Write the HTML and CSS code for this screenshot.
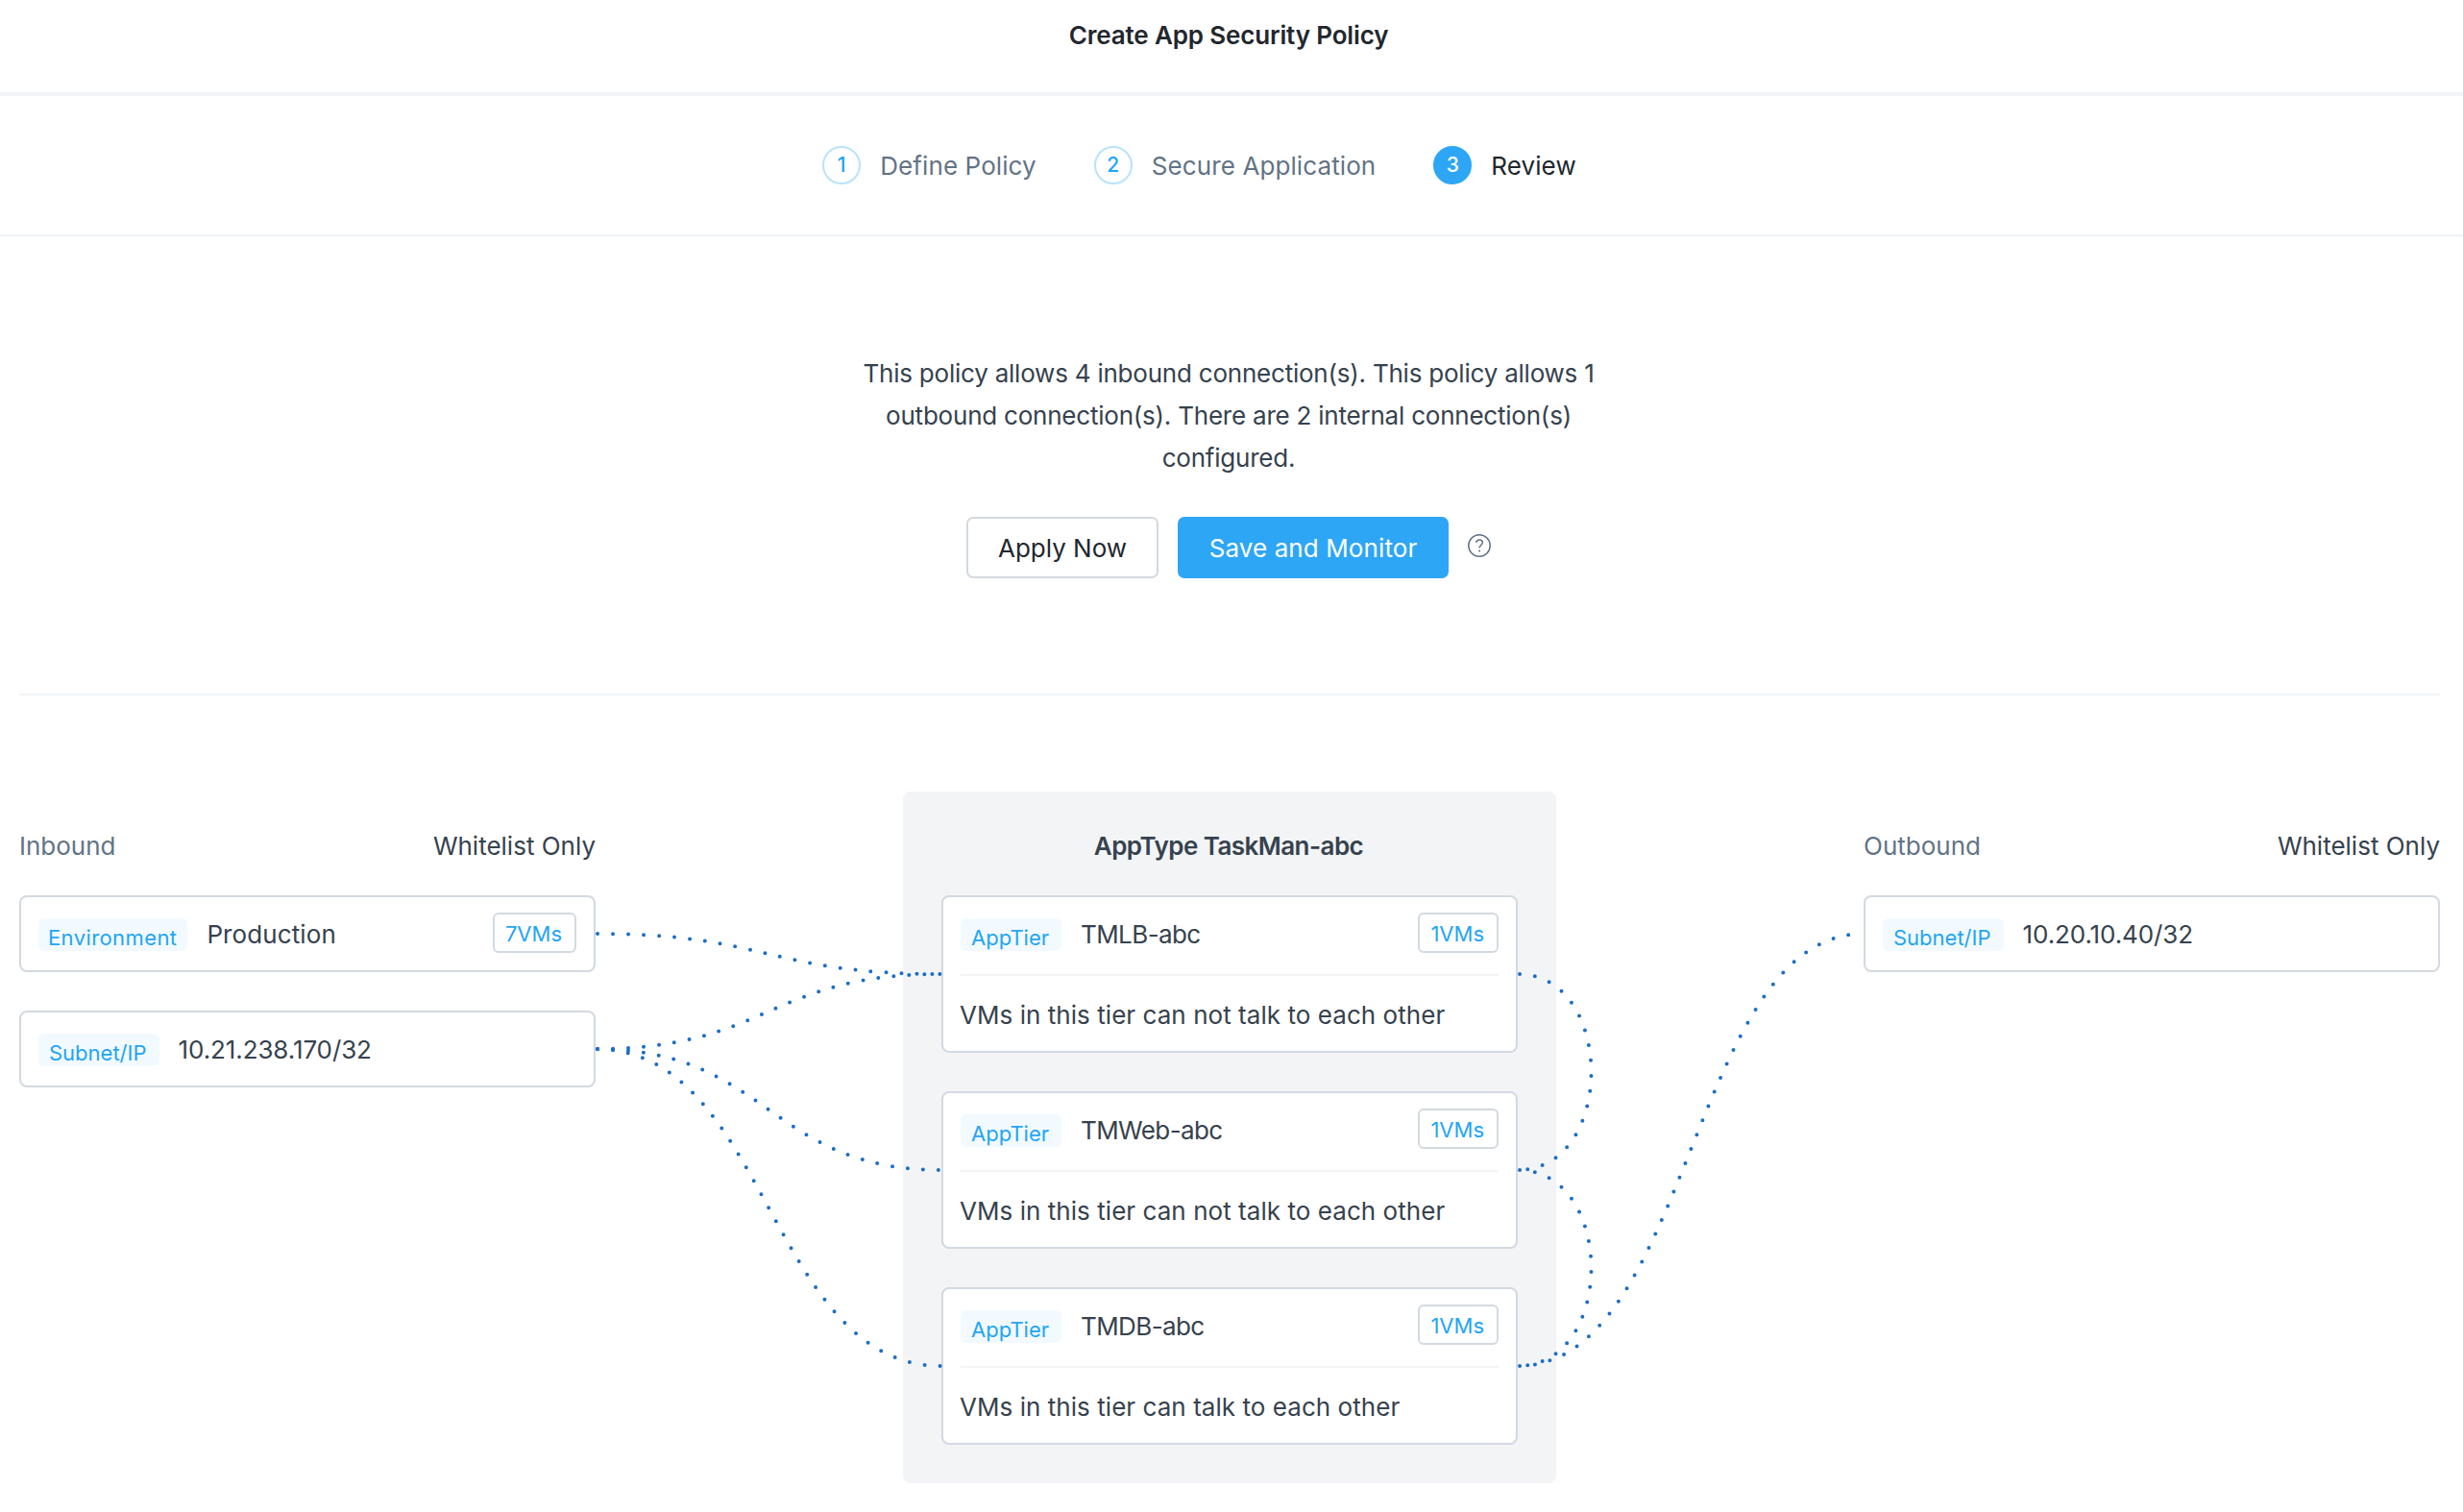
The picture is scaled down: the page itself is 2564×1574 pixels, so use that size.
FILE: index.html
```html
<!DOCTYPE html>
<html lang="en">
<head>
<meta charset="utf-8">
<title>Create App Security Policy</title>
<link rel="stylesheet" href="styles.css">
</head>
<body>
<header class="header"><h1 class="title">Create App Security Policy</h1></header>

<nav class="steps">
  <div class="step"><span class="step-num">1</span><span class="step-label">Define Policy</span></div>
  <div class="step"><span class="step-num">2</span><span class="step-label">Secure Application</span></div>
  <div class="step step-active"><span class="step-num">3</span><span class="step-label">Review</span></div>
</nav>

<main class="main">
  <section class="review">
    <p class="summary">This policy allows 4 inbound connection(s). This policy allows 1 outbound connection(s). There are 2 internal connection(s) configured.</p>
    <div class="actions">
      <button class="btn">Apply Now</button>
      <button class="btn btn-primary">Save and Monitor</button>
      <svg class="help" viewBox="0 0 24 24" fill="none" stroke="#627386">
        <circle cx="12" cy="12" r="11.2" stroke-width="1.5"/>
        <path d="M8.7 8.9C8.9 7 10.2 5.9 12.1 5.9C14.1 5.9 15.4 7.1 15.4 8.7C15.4 11.3 12.1 11.4 12.1 14.6" stroke-width="1.5"/>
        <circle cx="12.1" cy="17.6" r="1" fill="#627386" stroke="none"/>
      </svg>
    </div>
  </section>

  <section class="diagram">
    <div class="col">
      <div class="col-head"><span class="muted">Inbound</span><span>Whitelist Only</span></div>
      <div class="card">
        <div class="row"><span class="tag tag-env">Environment</span><span class="name name-env">Production</span><span class="vms">7VMs</span></div>
      </div>
      <div class="card">
        <div class="row"><span class="tag">Subnet/IP</span><span class="name ip">10.21.238.170/32</span></div>
      </div>
    </div>

    <div class="col panel">
      <div class="col-head panel-head">AppType TaskMan-abc</div>
      <div class="card">
        <div class="row row-tier"><span class="tag">AppTier</span><span class="name tier">TMLB-abc</span><span class="vms">1VMs</span></div>
        <p class="note">VMs in this tier can not talk to each other</p>
      </div>
      <div class="card">
        <div class="row row-tier"><span class="tag">AppTier</span><span class="name tier">TMWeb-abc</span><span class="vms">1VMs</span></div>
        <p class="note">VMs in this tier can not talk to each other</p>
      </div>
      <div class="card">
        <div class="row row-tier"><span class="tag">AppTier</span><span class="name tier">TMDB-abc</span><span class="vms">1VMs</span></div>
        <p class="note">VMs in this tier can talk to each other</p>
      </div>
    </div>

    <div class="col">
      <div class="col-head"><span class="muted">Outbound</span><span>Whitelist Only</span></div>
      <div class="card">
        <div class="row"><span class="tag">Subnet/IP</span><span class="name ip">10.20.10.40/32</span></div>
      </div>
    </div>

    <svg class="links" viewBox="0 0 2520 720">
      <path d="M600 148C780 148 780 190 960 190"/>
      <path d="M600 268C780 268 780 190 960 190"/>
      <path d="M600 268C780 268 780 394 960 394"/>
      <path d="M600 268C780 268 780 598 960 598"/>
      <path d="M1560 190C1662 190 1662 394 1560 394"/>
      <path d="M1560 394C1662 394 1662 598 1560 598"/>
      <path d="M1560 598C1740 598 1740 148 1920 148"/>
    </svg>
  </section>
</main>
</body>
</html>
```
FILE: styles.css
```css
* { box-sizing: border-box; }
body {
  margin: 0;
  background: #fff;
  color: #36424e;
  font: 400 26px/40px Inter, "Open Sans", sans-serif;
}
.header {
  height: 100px;
  padding: 17px 6px 0 0;
  border-bottom: 4px solid #f2f4f6;
  text-align: center;
}
.title {
  margin: 0;
  color: #22272e;
  font-size: 26px;
  font-weight: 600;
  letter-spacing: -0.15px;
}
.steps {
  display: flex;
  justify-content: center;
  gap: 60px;
  height: 146px;
  padding-right: 67px;
  align-items: center;
  border-bottom: 2px solid #f2f4f6;
  color: #627386;
}
.step { display: flex; align-items: center; gap: 20px; }
.step-label { padding-top: 2px; letter-spacing: 0.1px; }
.step-active { color: #22272e; }
.step-num {
  width: 40px;
  height: 40px;
  border: 2px solid #b9e3fd;
  border-radius: 50%;
  color: #22a5f7;
  font-size: 21px;
  font-weight: 500;
  line-height: 36px;
  text-align: center;
}
.step-active .step-num { background: #2ea6f6; border-color: #2ea6f6; color: #fff; }
.main { width: 2520px; margin-left: 20px; }
.review {
  display: flex;
  flex-direction: column;
  align-items: center;
  height: 478px;
  padding-top: 121px;
  border-bottom: 2px solid #f2f4f6;
}
.summary {
  width: 790px;
  margin: 0 2px 39px 0;
  line-height: 44px;
  letter-spacing: -0.22px;
  text-align: center;
}
.actions { display: flex; align-items: center; gap: 20px; margin-right: 2px; }
.btn {
  height: 64px;
  width: 200px;
  padding: 2px 0 0;
  border: 2px solid #d3d9e0;
  border-radius: 7px;
  background: #fff;
  color: #22272e;
  font: inherit;
}
.btn-primary { width: 282px; border-color: #2ea6f6; background: #2ea6f6; color: #fff; letter-spacing: 0.1px; }
.help { width: 24px; height: 24px; margin-bottom: 4px; }
.diagram {
  position: relative;
  display: grid;
  grid-template-columns: 600px 680px 600px;
  justify-content: space-between;
  height: 720px;
  margin-top: 100px;
}
.col { display: flex; flex-direction: column; gap: 40px; }
.col-head {
  display: flex;
  justify-content: space-between;
  height: 68px;
  padding-top: 37px;
}
.muted { color: #627386; }
.panel { padding: 0 40px; border-radius: 8px; background: #f2f4f6; }
.panel-head { justify-content: center; padding-right: 2px; font-weight: 600; letter-spacing: -0.55px; }
.card {
  min-height: 80px;
  padding: 16px 18px 0;
  border: 2px solid #d3d9e0;
  border-radius: 8px;
  background: #fff;
}
.row { display: flex; align-items: flex-start; }
.row-tier { height: 66px; border-bottom: 2px solid #f2f4f6; }
.tag {
  height: 34px;
  margin-top: 6px;
  padding: 6px 13px 0 11px;
  border-radius: 6px;
  background: #f2faff;
  color: #22a5f7;
  font-size: 22px;
  line-height: 28px;
}
.tag-env { padding: 6px 11px 0 10px; letter-spacing: 0.4px; }
.name { margin-left: 20px; line-height: 45px; }
.name-env { letter-spacing: 0.1px; }
.tier { letter-spacing: -0.6px; }
.ip { letter-spacing: -0.1px; }
.vms {
  height: 42px;
  margin-left: auto;
  padding: 2px 13px 0 11px;
  border: 2px solid #d3d9e0;
  border-radius: 6px;
  color: #22a5f7;
  font-size: 22px;
  line-height: 36px;
}
.note { height: 78px; margin: 0 0 0 -1px; padding-top: 3px; line-height: 75px; letter-spacing: 0.05px; }
.links {
  position: absolute;
  left: 0;
  top: 0;
  width: 2520px;
  height: 720px;
  fill: none;
  stroke: #1b6dc6;
  stroke-width: 4;
  stroke-linecap: round;
  stroke-dasharray: 0 16;
  stroke-dashoffset: -2;
  pointer-events: none;
}
```
